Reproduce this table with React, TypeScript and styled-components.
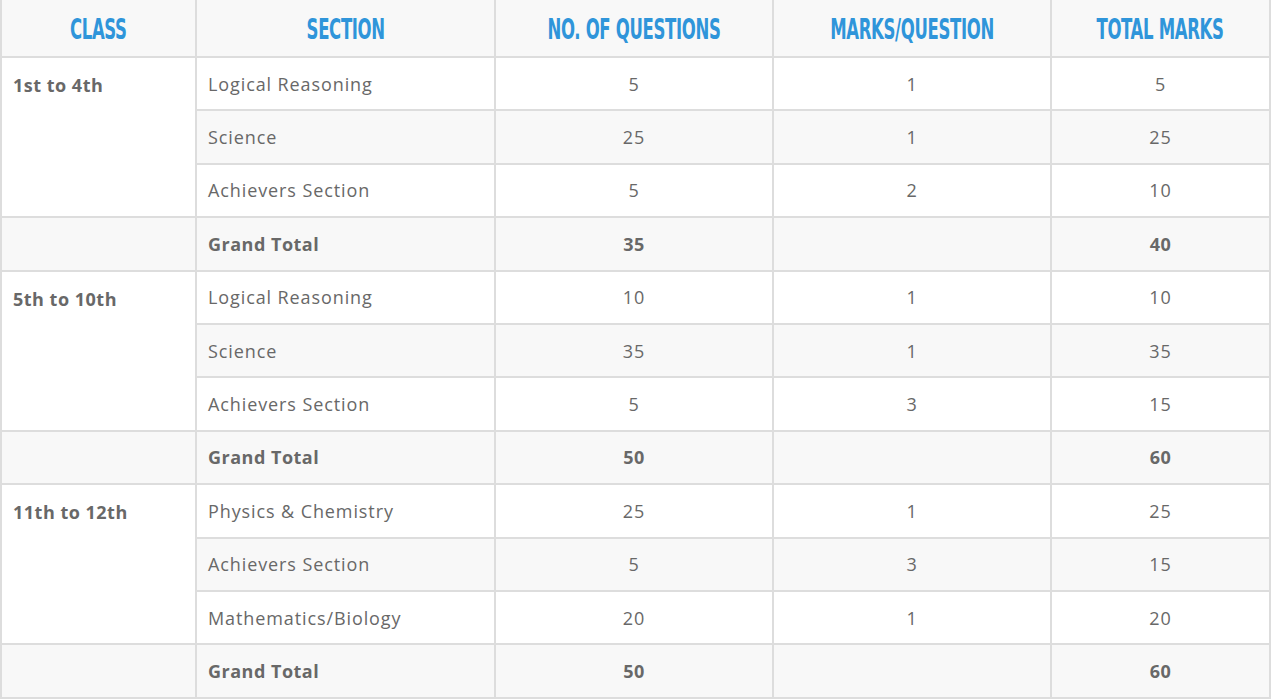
import React from "react";
import styled, { createGlobalStyle } from "styled-components";

const GlobalStyle = createGlobalStyle`
  html, body {
    margin: 0;
    padding: 0;
    background: #fff;
  }
`;

type Row = {
  section: string;
  questions: string;
  marks: string;
  total: string;
};

type Group = {
  label: string;
  rows: Row[];
  grand: { questions: string; total: string };
};

const groups: Group[] = [
  {
    label: "1st to 4th",
    rows: [
      { section: "Logical Reasoning", questions: "5", marks: "1", total: "5" },
      { section: "Science", questions: "25", marks: "1", total: "25" },
      { section: "Achievers Section", questions: "5", marks: "2", total: "10" },
    ],
    grand: { questions: "35", total: "40" },
  },
  {
    label: "5th to 10th",
    rows: [
      { section: "Logical Reasoning", questions: "10", marks: "1", total: "10" },
      { section: "Science", questions: "35", marks: "1", total: "35" },
      { section: "Achievers Section", questions: "5", marks: "3", total: "15" },
    ],
    grand: { questions: "50", total: "60" },
  },
  {
    label: "11th to 12th",
    rows: [
      { section: "Physics & Chemistry", questions: "25", marks: "1", total: "25" },
      { section: "Achievers Section", questions: "5", marks: "3", total: "15" },
      { section: "Mathematics/Biology", questions: "20", marks: "1", total: "20" },
    ],
    grand: { questions: "50", total: "60" },
  },
];

const columns = [195, 299, 278, 278, 219];
const headings = ["CLASS", "SECTION", "NO. OF QUESTIONS", "MARKS/QUESTION", "TOTAL MARKS"];

const Table = styled.table`
  width: 1269px;
  border-collapse: collapse;
  table-layout: fixed;
  font-family: "Open Sans", "Noto Sans", sans-serif;
  color: #686868;
  margin-top: -2px;
`;

const HeadRow = styled.tr`
  height: 58px;
  background: #f8f8f8;
`;

const HeadCell = styled.th`
  padding: 0 4px;
  border: 2px solid #dddddd;
  text-align: center;
  vertical-align: middle;
  white-space: nowrap;
`;

const HeadText = styled.span`
  display: inline-block;
  color: #2f95da;
  font-family: "DejaVu Sans Condensed", "DejaVu Sans", sans-serif;
  font-weight: 700;
  font-size: 28px;
  letter-spacing: -0.5px;
  transform: scaleX(0.655);
  padding-top: 3px;
`;

const BodyRow = styled.tr<{ $shade: boolean }>`
  height: 53.4px;
  background: ${(p) => (p.$shade ? "#f8f8f8" : "#ffffff")};
`;

const Cell = styled.td<{ $center?: boolean; $bold?: boolean }>`
  border: 2px solid #dddddd;
  padding: 0 11px;
  font-size: 18px;
  font-weight: ${(p) => (p.$bold ? 700 : 400)};
  letter-spacing: ${(p) => (p.$bold ? "0.5px" : "0.9px")};
  text-align: ${(p) => (p.$center ? "center" : "left")};
  vertical-align: middle;
`;

const ClassCell = styled.td`
  border: 2px solid #dddddd;
  padding: 15px 11px 0;
  font-size: 18px;
  font-weight: 700;
  letter-spacing: 0.5px;
  vertical-align: top;
  background: #fff;
`;

export default function App() {
  return (
    <>
      <GlobalStyle />
      <Table>
        <colgroup>
          {columns.map((w, i) => (
            <col key={i} style={{ width: w }} />
          ))}
        </colgroup>
        <thead>
          <HeadRow>
            {headings.map((h) => (
              <HeadCell key={h}>
                <HeadText>{h}</HeadText>
              </HeadCell>
            ))}
          </HeadRow>
        </thead>
        <tbody>
          {groups.map((g) => (
            <React.Fragment key={g.label}>
              {g.rows.map((r, i) => (
                <BodyRow key={r.section + i} $shade={i % 2 === 1}>
                  {i === 0 && <ClassCell rowSpan={3}>{g.label}</ClassCell>}
                  <Cell>{r.section}</Cell>
                  <Cell $center>{r.questions}</Cell>
                  <Cell $center>{r.marks}</Cell>
                  <Cell $center>{r.total}</Cell>
                </BodyRow>
              ))}
              <BodyRow $shade>
                <Cell />
                <Cell $bold>Grand Total</Cell>
                <Cell $center $bold>
                  {g.grand.questions}
                </Cell>
                <Cell $center />
                <Cell $center $bold>
                  {g.grand.total}
                </Cell>
              </BodyRow>
            </React.Fragment>
          ))}
        </tbody>
      </Table>
    </>
  );
}
